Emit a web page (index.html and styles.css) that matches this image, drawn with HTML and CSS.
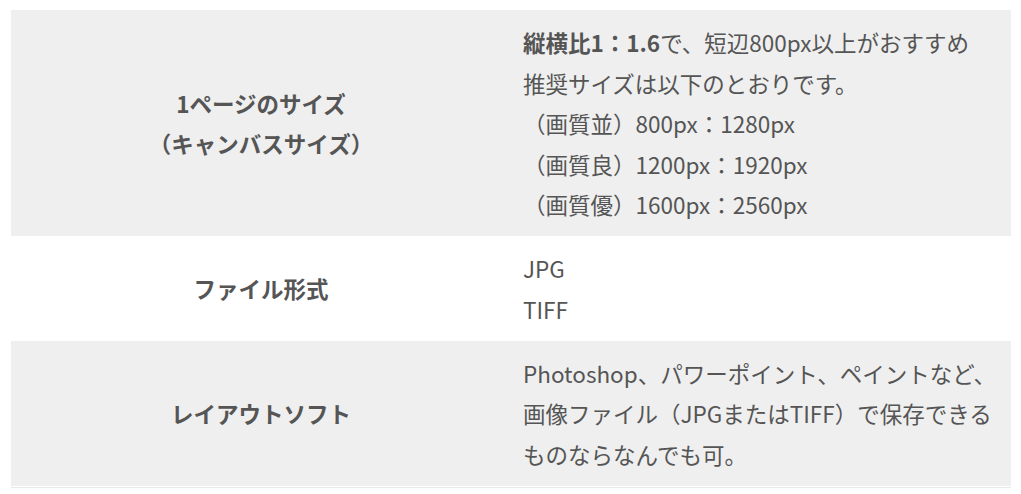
FILE: index.html
```html
<!DOCTYPE html>
<html lang="ja">
<head>
<meta charset="utf-8">
<link rel="stylesheet" href="styles.css">
</head>
<body>
<div class="spec-wrap">
<table class="spec">
  <tbody>
    <tr class="row-gray">
      <th class="spec-head">1ページのサイズ<br>（キャンバスサイズ）</th>
      <td class="spec-body"><strong>縦横比1：1.6</strong>で、短辺800px以上がおすすめ<br>推奨サイズは以下のとおりです。<br>（画質並）800px：1280px<br>（画質良）1200px：1920px<br>（画質優）1600px：2560px</td>
    </tr>
    <tr class="row-white">
      <th class="spec-head">ファイル形式</th>
      <td class="spec-body">JPG<br>TIFF</td>
    </tr>
    <tr class="row-gray">
      <th class="spec-head">レイアウトソフト</th>
      <td class="spec-body">Photoshop、パワーポイント、ペイントなど、<br>画像ファイル（JPGまたはTIFF）で保存できる<br>ものならなんでも可。</td>
    </tr>
  </tbody>
</table>
</div>
</body>
</html>
```

FILE: styles.css
```css
html, body {
  margin: 0;
  padding: 0;
  background: #ffffff;
}
body {
  padding: 10px 10px 0 11px;
  font-family: "Noto Sans CJK JP", "Noto Sans", sans-serif;
  color: #555555;
}
.spec-wrap {
  width: 1000px;
  padding-bottom: 1px;
  border-bottom: 1px solid #e8e8e8;
}
.spec {
  width: 1000px;
  border-collapse: collapse;
}
.row-gray {
  background: #efefef;
}
.row-white {
  background: #ffffff;
}
.spec-head {
  width: 500px;
  padding: 0;
  font-size: 22.5px;
  font-weight: 700;
  line-height: 1.8;
  text-align: center;
  vertical-align: middle;
}
.spec-body {
  padding: 12px 12px 11.5px 12px;
  font-size: 22.5px;
  font-weight: 400;
  line-height: 1.8;
  text-align: left;
  vertical-align: middle;
}
.spec-body strong {
  font-weight: 700;
}
```
